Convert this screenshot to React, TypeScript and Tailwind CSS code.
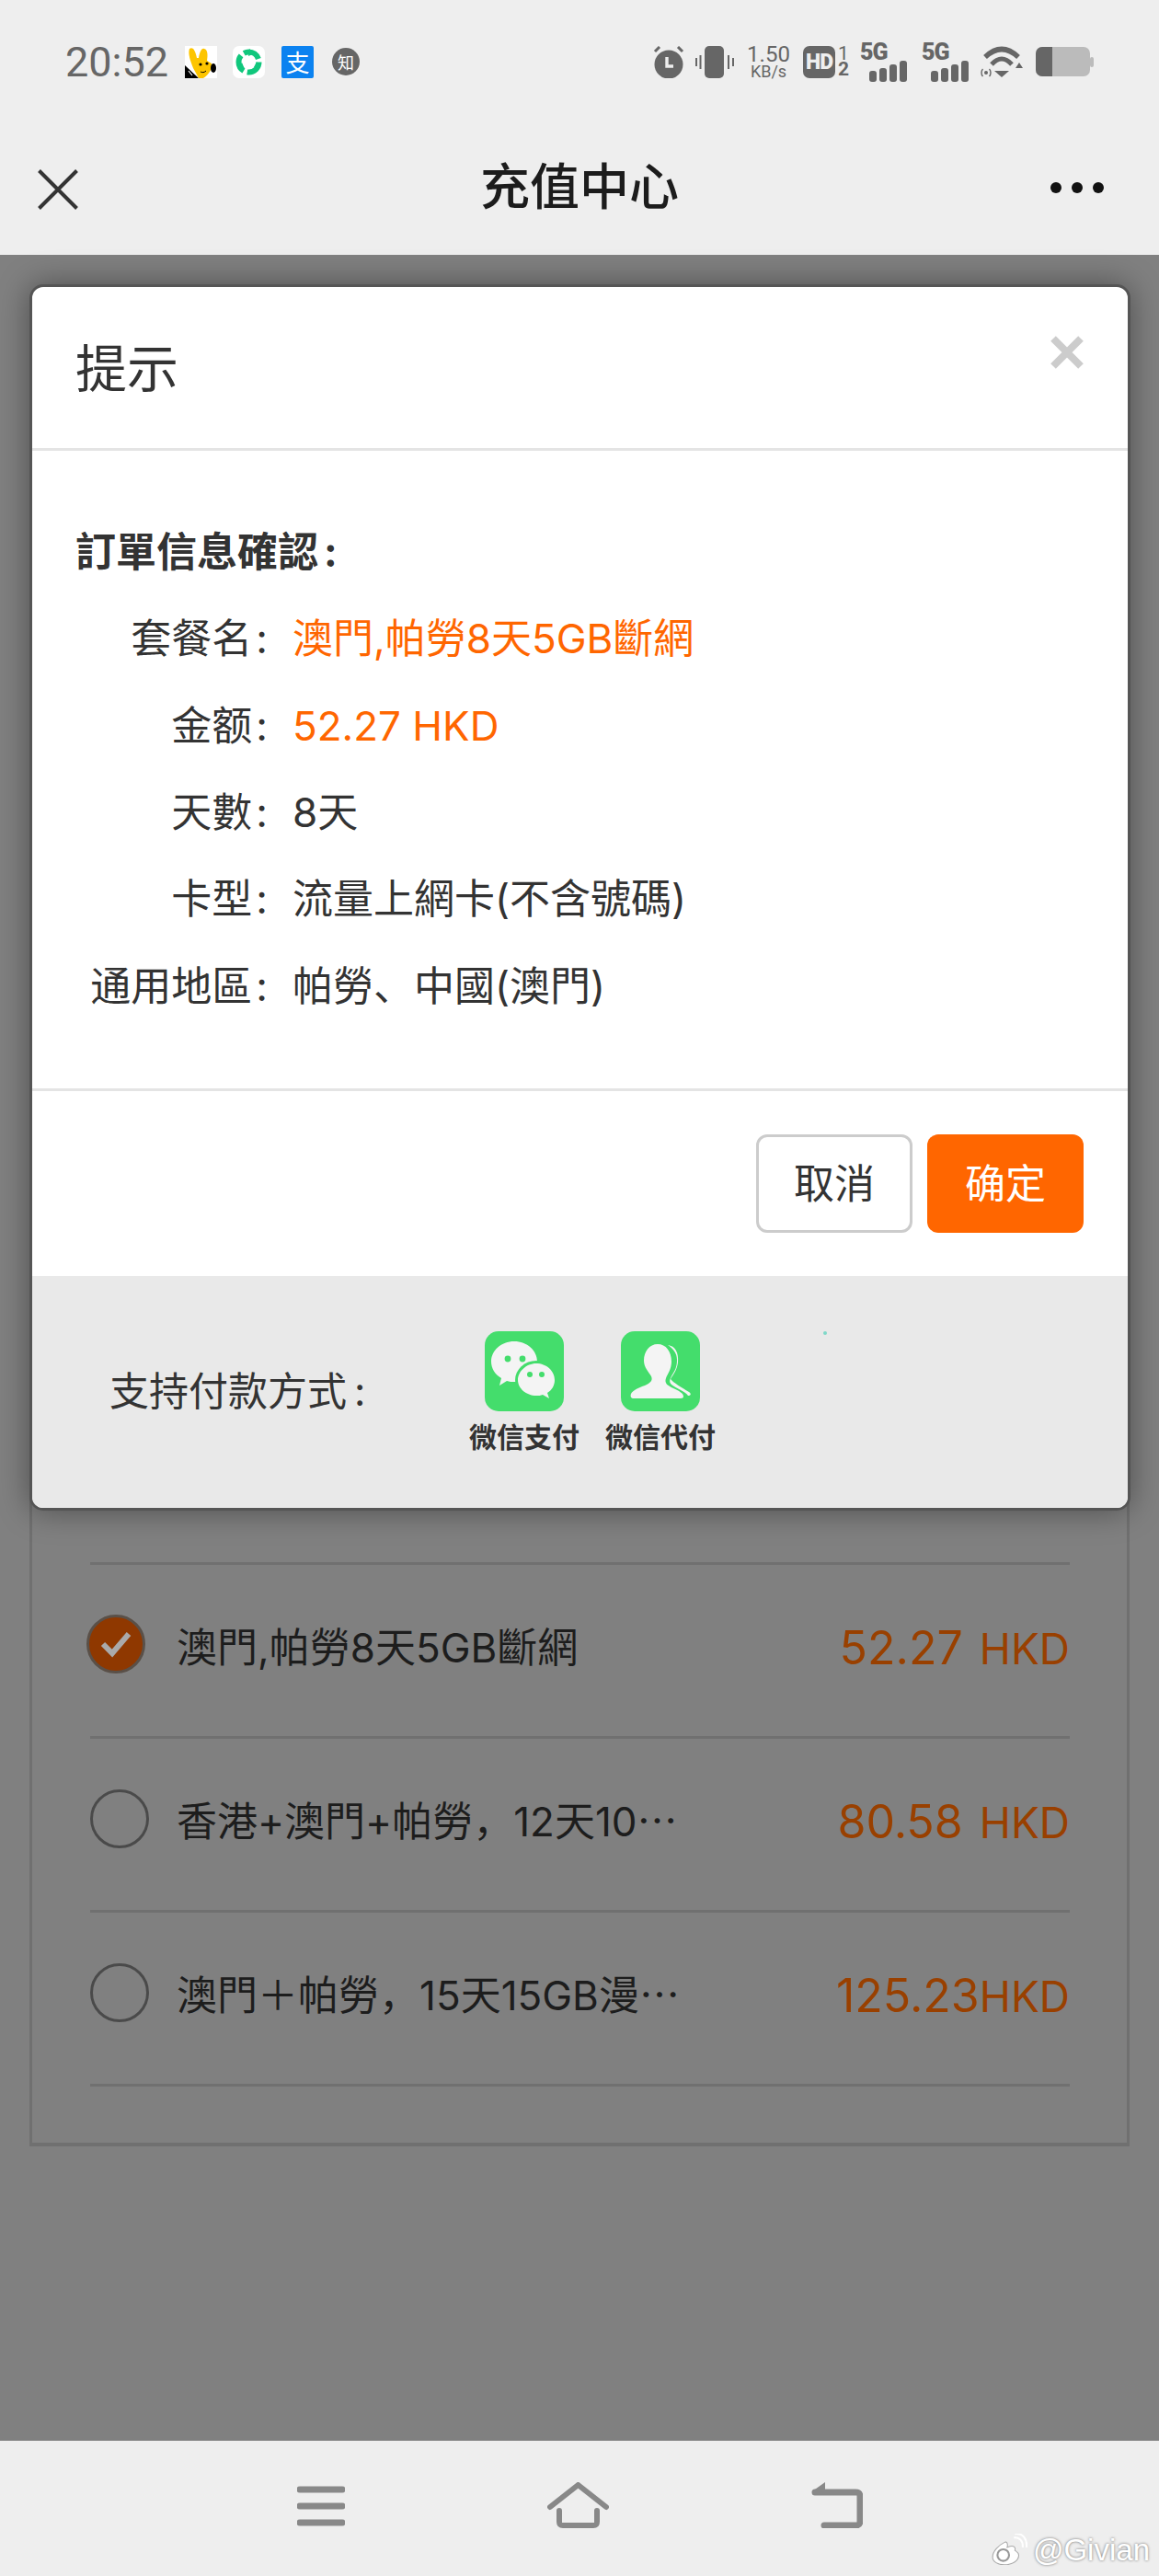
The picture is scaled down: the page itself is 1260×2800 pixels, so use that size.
import React from "react";

const cjk = "font-['Inter','Noto_Sans_CJK_SC',sans-serif]";

const orderRows = [
  { label: "套餐名", value: "澳門,帕勞8天5GB斷網", accent: true },
  { label: "金额", value: "52.27 HKD", accent: true },
  { label: "天數", value: "8天", accent: false },
  { label: "卡型", value: "流量上網卡(不含號碼)", accent: false },
  { label: "通用地區", value: "帕勞、中國(澳門)", accent: false },
];

const plans = [
  { name: "澳門,帕勞8天5GB斷網", price: "52.27", gap: true, checked: true },
  { name: "香港+澳門+帕勞，12天10⋯", price: "80.58", gap: true, checked: false },
  { name: "澳門＋帕勞，15天15GB漫⋯", price: "125.23", gap: false, checked: false },
];

function Bars() {
  return (
    <div className="flex items-end gap-[3px] ml-[10px] -mt-[8px]">
      <div className="w-[8px] h-[12px] rounded-[3px] bg-[#666]" />
      <div className="w-[8px] h-[15px] rounded-[3px] bg-[#666]" />
      <div className="w-[8px] h-[19px] rounded-[3px] bg-[#666]" />
      <div className="w-[8px] h-[23px] rounded-[3px] bg-[#666]" />
    </div>
  );
}

function StatusBar() {
  return (
    <div className="flex items-center h-[134px] font-['Roboto','Noto_Sans_CJK_SC',sans-serif]">
      <span className="ml-[71px] w-[110px] text-[45px] leading-none text-[#666]">20:52</span>
      {/* app notifications */}
      <svg className="ml-[20px]" width="35" height="35" viewBox="0 0 35 35">
        <rect width="35" height="35" fill="#fff" />
        <path d="M0 21L15 35H0Z" fill="#000" />
        <path d="M5 3c3-2 6 0 8 10h2c1-6 3-11 6-10 4 1 4 7 3 13l5 3c1 6-3 12-9 16h-5L9 24C6 16 3 8 5 3Z" fill="#fdc500" />
        <circle cx="17" cy="20" r="1.600" fill="#000" />
        <circle cx="24" cy="19" r="1.600" fill="#000" />
        <ellipse cx="31" cy="24" rx="3" ry="5" fill="#000" />
        <path d="M17 28c2 1 4 1 6-1" stroke="#000" fill="none" />
        <path d="M4 27l4 5M7 26l3 3" stroke="#fff" strokeWidth="1.200" />
      </svg>
      <svg className="ml-[17px]" width="35" height="35" viewBox="0 0 35 35">
        <rect width="35" height="35" rx="7" fill="#fff" />
        <circle cx="17.500" cy="17.500" r="11" fill="none" stroke="#10c77c" strokeWidth="6" strokeDasharray="19 4" />
        <path d="M18 3l6 5-7 3ZM30 24l-7-1 3-6ZM6 24l4-6 3 7Z" fill="#10c77c" />
      </svg>
      <div className="ml-[18px] w-[35px] h-[35px] rounded-[2px] bg-[#0b82f0] flex items-center justify-center text-[26px] leading-none text-white font-['Noto_Sans_CJK_SC']">
        支
      </div>
      <div className="ml-[20px] w-[30px] h-[30px] rounded-full bg-[#666] flex items-center justify-center text-[18px] leading-none text-white font-['Noto_Sans_CJK_SC']">
        知
      </div>

      {/* system icons */}
      <svg className="ml-[319px]" width="34" height="35" viewBox="0 0 34 35">
        <circle cx="17" cy="20" r="15.500" fill="#666" />
        <path d="M2 6l5-5M32 6l-5-5" stroke="#666" strokeWidth="3" />
        <path d="M15 12v10h7" stroke="#eee" strokeWidth="3.400" fill="none" />
      </svg>
      <svg className="ml-[12px]" width="42" height="35" viewBox="0 0 42 35">
        <rect x="10" width="21" height="35" rx="5" fill="#666" />
        <rect x="4.500" y="10" width="2" height="15" fill="#666" />
        <rect y="13" width="2" height="9" fill="#666" />
        <rect x="35" y="10" width="2" height="15" fill="#666" />
        <rect x="40" y="13" width="2" height="9" fill="#666" />
      </svg>
      <div className="ml-[16px] w-[43px] flex flex-col items-center text-[#666] font-['Roboto']">
        <span className="text-[24px] leading-[21px]">1.50</span>
        <span className="text-[18px] leading-[15px]">KB/s</span>
      </div>
      <div className="ml-[16px] w-[35px] h-[35px] rounded-[7px] bg-[#666] flex items-center justify-center text-[23px] leading-none font-black tracking-[-1px] text-[#eee] font-['Roboto']">
        HD
      </div>
      <div className="ml-[3px] w-[12px] flex flex-col items-center text-[21px] leading-[17px] font-bold text-[#666] font-['Roboto']">
        <span className="font-normal">1</span>
        <span>2</span>
      </div>
      <div className="ml-[12px] w-[52px] flex flex-col text-[25px] leading-[22px] font-black tracking-[-1px] text-[#666] font-['Roboto']">
        <span className="mb-[6px]">5G</span>
        <Bars />
      </div>
      <div className="ml-[15px] w-[52px] flex flex-col text-[25px] leading-[22px] font-black tracking-[-1px] text-[#666] font-['Roboto']">
        <span className="mb-[6px]">5G</span>
        <Bars />
      </div>
      <svg className="ml-[12px]" width="46" height="34" viewBox="0 0 46 34">
        <path d="M5 12Q23 -5 41 12" stroke="#666" strokeWidth="5.500" fill="none" />
        <path d="M12 20Q23 8 34 20" stroke="#666" strokeWidth="5" fill="none" />
        <path d="M15 27h16l-8 7Z" fill="#666" />
        <path d="M38 24l4-6 4 6Z" fill="#666" />
        <circle cx="6" cy="29" r="2" fill="#666" />
        <path d="M2.500 25c-2 2-2 6 0 8M9.500 25c2 2 2 6 0 8" stroke="#666" strokeWidth="1.400" fill="none" />
      </svg>
      <svg className="ml-[14px]" width="63" height="32" viewBox="0 0 63 32">
        <rect width="59" height="32" rx="7" fill="#bbb" />
        <rect x="59" y="11" width="4" height="11" rx="2" fill="#bbb" />
        <path d="M7 0h11v32H7a7 7 0 0 1-7-7V7a7 7 0 0 1 7-7Z" fill="#666" />
      </svg>
    </div>
  );
}

function NavBar() {
  return (
    <div className={`h-[143px] px-[41px] flex items-center ${cjk}`}>
      <div className="flex-1">
        <svg width="44" height="44" viewBox="0 0 44 44">
          <path d="M1.500 1.500l41 41M42.500 1.500l-41 41" stroke="#333" strokeWidth="4" />
        </svg>
      </div>
      <h1 className="text-[54px] leading-none font-medium text-[#1c1c1c] -mt-[4px]">充值中心</h1>
      <div className="flex-1 flex justify-end -mt-[4px]">
        <div className="flex items-center gap-[11px] mr-[19px]">
          <div className="w-[12px] h-[12px] rounded-full bg-[#111]" />
          <div className="w-[12px] h-[12px] rounded-full bg-[#111]" />
          <div className="w-[12px] h-[12px] rounded-full bg-[#111]" />
        </div>
      </div>
    </div>
  );
}

function PlanList() {
  return (
    <div className={`mx-[32px] border-[3px] border-b-[4px] border-[#707070] pt-[135px] pb-[61px] pl-[63px] pr-[62px] ${cjk}`}>
      <div className="border-t-[3px] border-[#707070]">
        {plans.map((p) => (
          <div key={p.price} className="h-[189px] pb-[6px] border-b-[3px] border-[#707070] flex items-center">
            {p.checked ? (
              <div className="w-[64px] h-[64px] -ml-[4px] mr-[34px] -mt-[8px] rounded-full border-[3px] border-[#5a5048] bg-[#8f3800] flex items-center justify-center">
                <svg width="36" height="30" viewBox="0 0 36 30">
                  <path d="M4 15l10 10L32 4" stroke="#aaa" strokeWidth="6" fill="none" />
                </svg>
              </div>
            ) : (
              <div className="w-[64px] h-[64px] mr-[30px] -mt-[6px] rounded-full border-[3px] border-[#4a4a4a]" />
            )}
            <span className="text-[44px] leading-[60px] text-[#1d1d1d] whitespace-nowrap">{p.name}</span>
            <span className="ml-auto text-[#994000] whitespace-nowrap">
              <span className="text-[50px]">{p.price}</span>
              <span className={`text-[46px] ${p.gap ? "ml-[18px]" : ""}`}>HKD</span>
            </span>
          </div>
        ))}
      </div>
    </div>
  );
}

function WechatPayIcon() {
  return (
    <svg width="86" height="87" viewBox="0 0 86 87">
      <rect width="86" height="87" rx="15" fill="#44dd6c" />
      <path d="M32 11c14 0 25 10 25 22s-11 22-25 22c-3 0-5 0-8-1l-8 5 2-8C11 47 7 40 7 33c0-12 11-22 25-22Z" fill="#f4f4f4" />
      <circle cx="25" cy="30" r="3.400" fill="#44dd6c" />
      <circle cx="41" cy="30" r="3.400" fill="#44dd6c" />
      <ellipse cx="56" cy="53" rx="23" ry="21" fill="#44dd6c" />
      <path d="M56 35c11 0 20 8 20 18 0 6-3 11-8 14l2 6-7-4c-2 1-5 1-7 1-11 0-20-8-20-17s9-18 20-18Z" fill="#f4f4f4" />
      <circle cx="49" cy="47" r="3" fill="#44dd6c" />
      <circle cx="62" cy="47" r="3" fill="#44dd6c" />
    </svg>
  );
}

function WechatProxyIcon() {
  return (
    <svg width="86" height="87" viewBox="0 0 86 87">
      <rect width="86" height="87" rx="15" fill="#44dd6c" />
      <path d="M51 15c8 1 12 8 11 19-1 8-5 13-8 18 3 4 12 9 20 14 3 2 2 4-1 4-2-4-13-8-18-12-3-3-2-6 1-11 4-6 5-10 5-16 0-7-4-12-10-16Z" fill="#f4f4f4" />
      <path d="M40 14c9 0 15 8 15 19 0 8-4 13-6 18-2 6 2 8 8 11 6 3 11 5 11 9 0 1-1 2-3 2H14c-3 0-4-2-3-5 2-4 9-7 15-9 6-3 9-5 7-10-3-5-8-10-8-17 0-10 6-18 15-18Z" fill="#f4f4f4" />
    </svg>
  );
}

function OrderModal() {
  return (
    <div className={`absolute left-[32px] top-[32px] w-[1197px] rounded-[15px] border-[3px] border-[#555] bg-white overflow-hidden shadow-[0_0_34px_rgba(0,0,0,0.4)] ${cjk}`}>
      <div className="h-[178px] px-[47px] flex justify-between border-b-[3px] border-[#e4e4e4]">
        <h2 className="mt-[61px] text-[56px] leading-none text-[#333]">提示</h2>
        <svg className="mt-[53px] mr-[1px]" width="36" height="36" viewBox="0 0 36 36">
          <path d="M3 3l30 30M33 3L3 33" stroke="#ccc" strokeWidth="8" />
        </svg>
      </div>
      <div className="h-[696px] pt-[80px] px-[47px] border-b-[3px] border-[#e4e4e4] text-[#333]">
        <p className="text-[44px] leading-[60px] font-bold">
          訂單信息確認<span className="ml-[6px]">:</span>
        </p>
        <div className="mt-[17px] -ml-[47px]">
          {orderRows.map((r) => (
            <div key={r.label} className="h-[94.4px] flex items-center text-[44px]">
              <span className="w-[256px] shrink-0 text-right whitespace-nowrap">
                {r.label}
                <span className="ml-[4px]">:</span>
              </span>
              <span className={`ml-[27px] ${r.accent ? "text-[#ff6600]" : "text-[#333]"}`}>{r.value}</span>
            </div>
          ))}
        </div>
      </div>
      <div className="h-[201px] pt-[47px] pr-[48px] flex justify-end gap-[16px] text-[44px]">
        <button className="w-[170px] h-[107px] rounded-[12px] border-[3px] border-[#ccc] bg-white text-[#333]">取消</button>
        <button className="w-[170px] h-[107px] rounded-[12px] bg-[#ff6600] text-white">确定</button>
      </div>
      <div className="relative h-[252px] bg-[#e9e9e9] flex items-start pl-[84px]">
        <span className="w-[377px] mt-[95px] text-[43px] leading-[60px] text-[#333]">
          支持付款方式<span className="ml-[8px]">:</span>
        </span>
        <div className="mt-[60px] w-[148px] flex flex-col items-center">
          <WechatPayIcon />
          <span className="mt-[11px] text-[30px] leading-[34px] font-bold text-[#333] whitespace-nowrap">微信支付</span>
        </div>
        <div className="mt-[60px] w-[148px] flex flex-col items-center">
          <WechatProxyIcon />
          <span className="mt-[11px] text-[30px] leading-[34px] font-bold text-[#333] whitespace-nowrap">微信代付</span>
        </div>
        <div className="absolute left-[860px] top-[60px] w-[4px] h-[4px] rounded-full bg-[#7fd8c8]" />
      </div>
    </div>
  );
}

function BottomNav() {
  return (
    <div className="relative h-[147px] bg-[#eee] flex justify-center gap-[220px] pt-[45px]">
      <svg width="52" height="50" viewBox="0 0 52 50">
        <path d="M3 11h46M3 29h46M3 47h46" stroke="#888" strokeWidth="7" strokeLinecap="round" transform="translate(0 -3)" />
      </svg>
      <svg width="67" height="50" viewBox="0 0 67 50">
        <path d="M3 27L33.500 3 64 27" stroke="#888" strokeWidth="6" strokeLinecap="round" strokeLinejoin="round" fill="none" />
        <path d="M13 31v12c0 3 1 4 4 4h33c3 0 4-1 4-4V31" stroke="#888" strokeWidth="6" strokeLinecap="round" fill="none" />
      </svg>
      <svg width="56" height="50" viewBox="0 0 56 50">
        <path d="M4 11h44c4 0 5 1 5 5v26c0 4-1 5-5 5H14" stroke="#888" strokeWidth="7" strokeLinecap="round" fill="none" />
        <path d="M1 10l14-10v14H3Z" fill="#888" />
      </svg>
      <div className="absolute right-[10px] bottom-[12px] flex items-center gap-[6px]">
        <svg width="40" height="34" viewBox="0 0 38 32">
          <path d="M14 9c-6 3-12 9-12 15 0 5 6 8 12 8 8 0 15-4 15-10 0-3-3-4-4-5 1-3-1-5-5-4l-3 1c1-3 0-7-3-5Z" fill="#fff" stroke="#aaa" />
          <circle cx="13" cy="22" r="6" fill="none" stroke="#999" strokeWidth="2" />
          <path d="M24 4c5-1 10 3 9 10M25 0c8-1 13 5 12 14" stroke="#fff" strokeWidth="2" fill="none" />
        </svg>
        <span className="text-[33px] leading-none text-white font-['Liberation_Sans'] [text-shadow:0_0_3px_#666]">@Givian</span>
      </div>
    </div>
  );
}

export default function App() {
  return (
    <div className="w-[1260px] h-[2800px] flex flex-col bg-[#808080] overflow-hidden">
      <div className="bg-[#eee]">
        <StatusBar />
        <NavBar />
      </div>
      <div className="relative flex-1 pt-[1283px]">
        <PlanList />
        <OrderModal />
      </div>
      <BottomNav />
    </div>
  );
}
